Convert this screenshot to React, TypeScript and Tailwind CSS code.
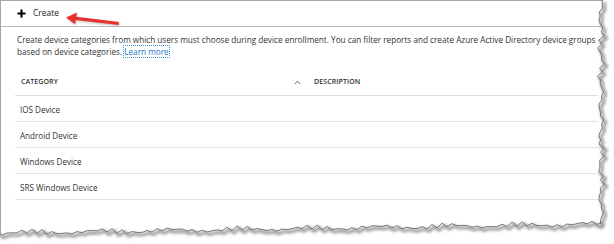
import { Plus } from "lucide-react"

const rows = ["IOS Device", "Android Device", "Windows Device", "SRS Windows Device"]

// jagged torn-paper edge along the right and bottom
function tornEdge() {
  const pts: [number, number][] = []
  for (let y = 0; y <= 224; y += 4) {
    const x = 601 + 1.6 * Math.sin(y * 0.9) + 1.8 * Math.sin(y * 0.21 + 1) + 0.8 * Math.sin(y * 2.3)
    pts.push([x, y])
  }
  for (let x = 602; x >= -4; x -= 5) {
    const y =
      224 + 9 * (1 - x / 600) + 1.6 * Math.sin(x * 0.55) + 1.4 * Math.sin(x * 0.09 + 2) + 0.7 * Math.sin(x * 1.9)
    pts.push([x, y])
  }
  return pts
}

function TornOverlay() {
  const pts = tornEdge()
  const line = pts.map(([x, y], i) => `${i ? "L" : "M"}${x.toFixed(1)},${y.toFixed(1)}`).join(" ")
  const fill = `M614,0 ${line.replace("M", "L")} L-4,244 L614,244 Z`
  return (
    <svg className="pointer-events-none absolute inset-0" width={614} height={244}>
      <defs>
        <filter id="blur" x="-10%" y="-10%" width="120%" height="120%">
          <feGaussianBlur stdDeviation="1.4" />
        </filter>
      </defs>
      <path d={fill} fill="#fff" />
      <path d={line} transform="translate(2.2,2.4)" fill="none" stroke="#8a8a8a" strokeWidth={2.6} filter="url(#blur)" />
      <path d={line} fill="none" stroke="#6e6e6e" strokeWidth={0.9} />
    </svg>
  )
}

function Arrow() {
  return (
    <svg className="absolute left-[62px] top-[9px]" width={60} height={18} viewBox="0 0 60 18">
      <defs>
        <filter id="ash" x="-20%" y="-50%" width="140%" height="200%">
          <feGaussianBlur stdDeviation="0.8" />
        </filter>
      </defs>
      <g transform="translate(0.8,1.2)" opacity={0.35} filter="url(#ash)">
        <path d="M3,7.5 L14,2.5 L13.2,6.8 L56,12 L55.6,15 L12.8,10 L12,14.2 Z" fill="#555" />
      </g>
      <path d="M3,7.5 L14,2.5 L13.2,6.8 L56,12 L55.6,15 L12.8,10 L12,14.2 Z" fill="#e8312d" />
    </svg>
  )
}

export default function App() {
  return (
    <div
      className="relative h-[244px] w-[614px] overflow-hidden bg-white text-[#333]"
      style={{ fontFamily: '"Open Sans", "Noto Sans", sans-serif' }}
    >
      <div className="h-full w-[606px] border-l border-t border-[#a6a6a6]">
        <div className="relative flex h-[26px] items-center gap-[6px] border-b border-[#b9b9b9] pl-[15px]">
          <Plus className="h-[11px] w-[11px] text-black" strokeWidth={4.5} />
          <span className="text-[8.5px] text-[#222]">Create</span>
          <Arrow />
        </div>

        <div className="pl-[16px] pt-[7px] text-[8.2px] leading-[11.5px] text-[#333]">
          <div className="whitespace-nowrap">
            Create device categories from which users must choose during device enrollment. You can filter reports and
            create Azure Active Directory device groups
          </div>
          <div className="whitespace-nowrap">
            based on device categories.{" "}
            <span className="outline-1 outline-dotted outline-[#3a9ad9] text-[#1a78c2]">Learn more</span>
          </div>
        </div>

        <div className="ml-[14px] mr-[8px] mt-[12px]">
          <div className="flex h-[27px] items-center border-b border-[#dcdcdc] text-[7px] font-semibold tracking-[0.1px] text-[#333]">
            <div className="flex w-[294px] items-center justify-between pl-[6px] pr-[10px]">
              <span>CATEGORY</span>
              <svg width={7} height={5} viewBox="0 0 7 5" className="mr-[-2px]">
                <path d="M0.8,4 L3.5,1.2 L6.2,4" fill="none" stroke="#555" strokeWidth={0.9} />
              </svg>
            </div>
            <span className="pl-[5px]">DESCRIPTION</span>
          </div>
          {rows.map((r) => (
            <div
              key={r}
              className="flex h-[26px] items-center border-b border-[#e2e2e2] pl-[5px] pt-[3px] text-[8.1px] text-[#333]"
            >
              {r}
            </div>
          ))}
        </div>
      </div>
      <TornOverlay />
    </div>
  )
}
